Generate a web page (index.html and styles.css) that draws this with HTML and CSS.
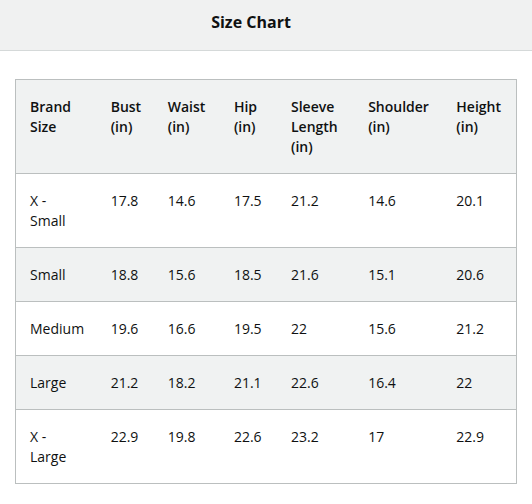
FILE: index.html
```html
<!DOCTYPE html>
<html lang="en">
<head>
<meta charset="utf-8">
<title>Size Chart</title>
<link rel="stylesheet" href="styles.css">
</head>
<body>
<div class="popover">
  <header class="popover-header">
    <h4 class="popover-title">Size Chart</h4>
  </header>
  <div class="popover-body">
    <table class="size-table">
      <colgroup>
        <col class="c-brand">
        <col class="c-bust">
        <col class="c-waist">
        <col class="c-hip">
        <col class="c-sleeve">
        <col class="c-shoulder">
        <col class="c-height">
      </colgroup>
      <thead>
        <tr class="alt">
          <th class="first">Brand Size</th>
          <th>Bust (in)</th>
          <th>Waist (in)</th>
          <th>Hip (in)</th>
          <th>Sleeve Length (in)</th>
          <th>Shoulder (in)</th>
          <th>Height (in)</th>
        </tr>
      </thead>
      <tbody>
        <tr>
          <td class="first">X - Small</td><td>17.8</td><td>14.6</td><td>17.5</td><td>21.2</td><td>14.6</td><td>20.1</td>
        </tr>
        <tr class="alt">
          <td class="first">Small</td><td>18.8</td><td>15.6</td><td>18.5</td><td>21.6</td><td>15.1</td><td>20.6</td>
        </tr>
        <tr>
          <td class="first">Medium</td><td>19.6</td><td>16.6</td><td>19.5</td><td>22</td><td>15.6</td><td>21.2</td>
        </tr>
        <tr class="alt">
          <td class="first">Large</td><td>21.2</td><td>18.2</td><td>21.1</td><td>22.6</td><td>16.4</td><td>22</td>
        </tr>
        <tr>
          <td class="first">X - Large</td><td>22.9</td><td>19.8</td><td>22.6</td><td>23.2</td><td>17</td><td>22.9</td>
        </tr>
      </tbody>
    </table>
  </div>
</div>
</body>
</html>
```

FILE: styles.css
```css
html, body {
  margin: 0;
  padding: 0;
  background: #ffffff;
}

body {
  font-family: "Open Sans", "Noto Sans", sans-serif;
  font-size: 14px;
  line-height: 20px;
  color: #0f1111;
}

.popover-header {
  background: #f0f1f1;
  border-bottom: 1px solid #d5d9d9;
  height: 51px;
  box-sizing: border-box;
  padding: 12px 30px 0 0;
}

.popover-title {
  margin: 0;
  text-align: center;
  font-size: 16px;
  line-height: 20px;
  font-weight: 700;
}

.popover-body {
  padding: 28px 15px 0 15px;
}

.size-table {
  width: 100%;
  table-layout: fixed;
  border-collapse: collapse;
  border: 1px solid #bbbfbf;
}

.c-brand { width: 81px; }
.c-bust { width: 57px; }
.c-waist { width: 66px; }
.c-hip { width: 57px; }
.c-sleeve { width: 77px; }
.c-shoulder { width: 88px; }
.c-height { width: 74px; }

.size-table th,
.size-table td {
  text-align: left;
  vertical-align: top;
  padding: 17px 14px 16px 14px;
  border-top: 1px solid #bbbfbf;
  white-space: normal;
}

.size-table th {
  font-weight: 600;
}

.size-table td {
  font-weight: 400;
}

.size-table .first {
  padding-right: 24px;
}

.size-table tr.alt {
  background: #f0f2f2;
}
```
